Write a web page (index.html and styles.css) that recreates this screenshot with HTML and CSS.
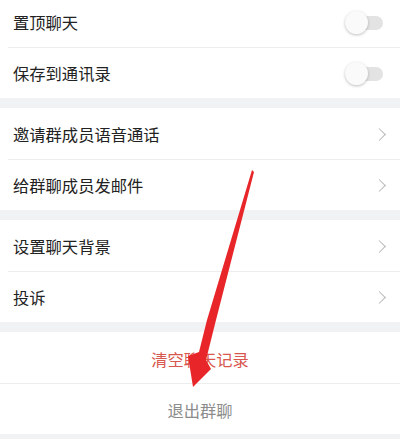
FILE: index.html
```html
<!DOCTYPE html>
<html lang="zh-CN">
<head>
  <meta charset="UTF-8" />
  <meta name="viewport" content="width=device-width, initial-scale=1.0"/>
  <title>聊天信息</title>
  <link rel="stylesheet" href="styles.css">
</head>
<body>
  <div class="page">
    <div class="group">
      <div class="row">
        <span class="label">置顶聊天</span>
        <span class="switch"><span class="knob"></span></span>
      </div>
      <div class="row">
        <span class="label">保存到通讯录</span>
        <span class="switch"><span class="knob"></span></span>
      </div>
    </div>

    <div class="group">
      <div class="row">
        <span class="label">邀请群成员语音通话</span>
        <span class="chevron"></span>
      </div>
      <div class="row">
        <span class="label">给群聊成员发邮件</span>
        <span class="chevron"></span>
      </div>
    </div>

    <div class="group">
      <div class="row">
        <span class="label">设置聊天背景</span>
        <span class="chevron"></span>
      </div>
      <div class="row">
        <span class="label">投诉</span>
        <span class="chevron"></span>
      </div>
    </div>

    <div class="group">
      <div class="row action danger">清空聊天记录</div>
      <div class="row action muted">退出群聊</div>
    </div>
  </div>

  <!-- annotation arrow drawn over the screenshot -->
  <svg class="arrow" width="400" height="439" viewBox="0 0 400 439">
    <polygon fill="#e8262a" points="252,170 254,172 216,320 206,360 211,369 193,387 188,356 199,352 207,320"/>
  </svg>
</body>
</html>
```

FILE: styles.css
```css
:root {
  --bg: #f1f2f4;
  --text: #222;
  --line: #ededed;
  --red: #d8574e;
  --muted: #8c8c8c;
}

body {
  margin: 0;
  font-family: "Noto Sans CJK SC", "Noto Sans", sans-serif;
  background: var(--bg);
  color: var(--text);
  overflow: hidden;
}

.page {
  margin-top: -4px;
}

.group {
  background: #fff;
  margin-bottom: 10px;
}

.row {
  box-sizing: border-box;
  height: 51px;
  display: flex;
  align-items: center;
  justify-content: space-between;
  padding: 2px 13px 0;
  font-size: 16.3px;
  position: relative;
}

.row + .row::before {
  content: "";
  position: absolute;
  top: 0;
  left: 8px;
  right: 0;
  border-top: 1px solid var(--line);
}

.action + .action::before {
  left: 0;
}

.label {
  line-height: 1;
}

.switch {
  width: 38px;
  height: 14px;
  border-radius: 7px;
  background: #e3e3e3;
  display: flex;
  align-items: center;
  margin-right: 4px;
}

.knob {
  width: 23px;
  height: 23px;
  border-radius: 50%;
  background: #fafafa;
  box-shadow: 0 1px 3px rgba(0,0,0,0.25);
}

.chevron {
  width: 8px;
  height: 8px;
  border-top: 1.5px solid #b8b8b8;
  border-right: 1.5px solid #b8b8b8;
  transform: rotate(45deg);
  margin-right: 3px;
}

.action {
  justify-content: center;
}

.danger {
  color: var(--red);
}

.muted {
  color: var(--muted);
}

.arrow {
  position: absolute;
  top: 0;
  left: 0;
  pointer-events: none;
}
```
